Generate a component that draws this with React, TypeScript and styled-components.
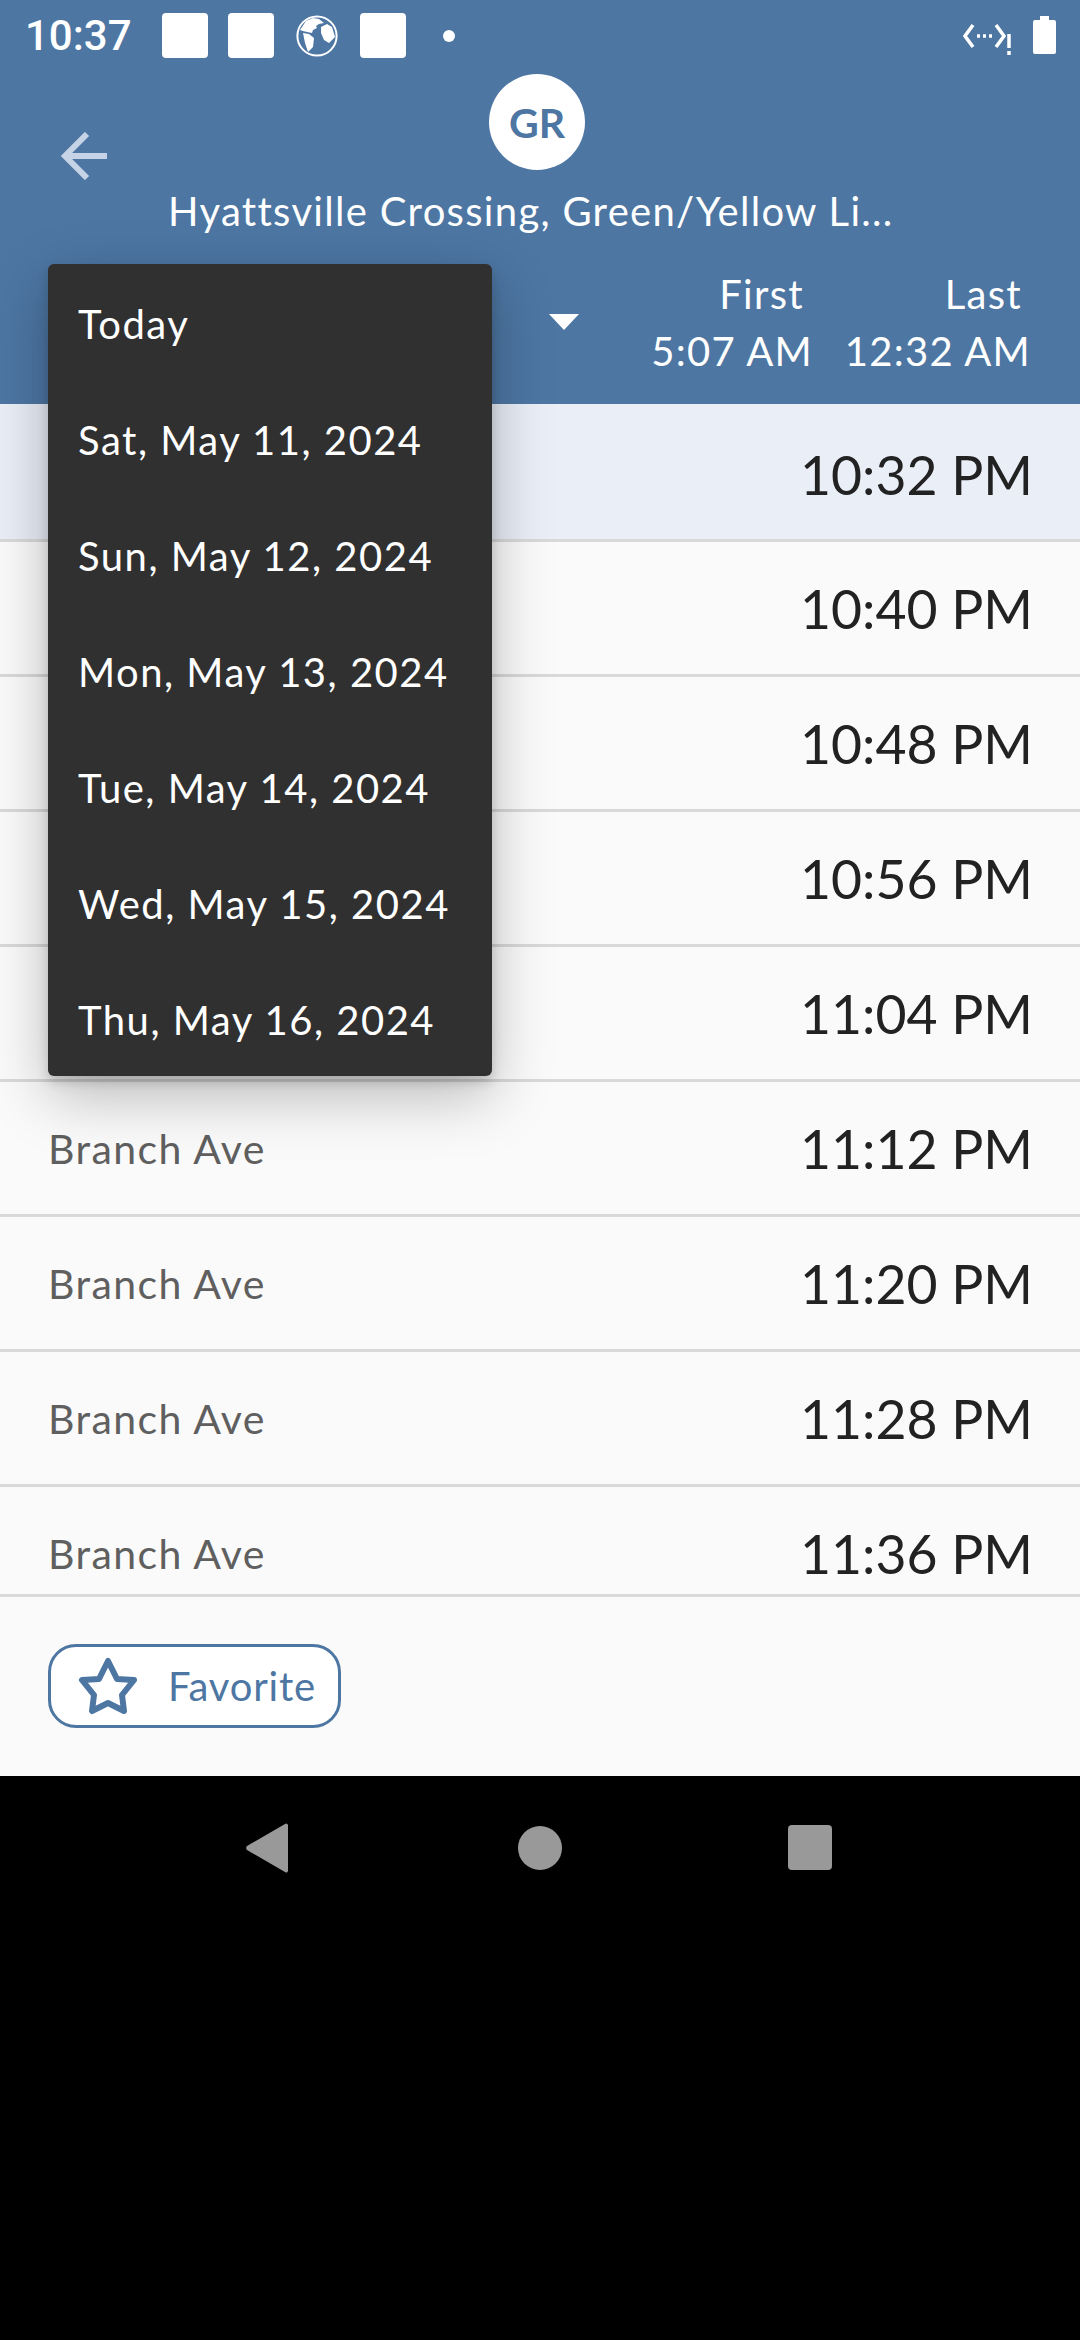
import React from "react";
import styled, { createGlobalStyle } from "styled-components";

const BLUE = "#4d76a3";
const FONT = `"Lato", "Noto Sans", sans-serif`;

const GlobalStyle = createGlobalStyle`
  html, body { margin: 0; padding: 0; background: #000; }
  body { font-family: ${FONT}; }
  * { box-sizing: border-box; }
`;

const Screen = styled.div`
  position: relative;
  width: 1080px;
  height: 2340px;
  display: flex;
  flex-direction: column;
  background: #000;
  overflow: hidden;
`;

const Header = styled.header`
  height: 404px;
  background: ${BLUE};
  display: flex;
  flex-direction: column;
  flex: none;
`;

const StatusBar = styled.div`
  height: 74px;
  padding: 13px 24px 0 25px;
  display: flex;
  align-items: flex-start;
  color: #fff;
`;

const Clock = styled.span`
  font-family: Roboto, sans-serif;
  font-size: 42px;
  font-weight: 500;
  line-height: 46px;
  width: 137px;
`;

const StatusSquare = styled.span`
  width: 46px;
  height: 45px;
  border-radius: 4px;
  background: #fff;
  margin-right: 20px;
`;

const GlobeIcon = styled.svg`
  width: 42px;
  height: 42px;
  margin: 2px 22px 0 2px;
`;

const StatusDot = styled.span`
  width: 12px;
  height: 12px;
  border-radius: 50%;
  background: #fff;
  margin: 17px 0 0 17px;
`;

const StatusRight = styled.div`
  margin-left: auto;
  display: flex;
  gap: 20px;
  align-items: flex-start;
`;

const SignalIcon = styled.svg`
  width: 50px;
  height: 36px;
  margin-top: 7px;
`;

const BatteryIcon = styled.svg`
  width: 23px;
  height: 38px;
  margin-top: 3px;
`;

const TitleBlock = styled.div`
  height: 168px;
  display: flex;
  flex-direction: column;
  align-items: center;
  position: relative;
  padding-right: 6px;
`;

const BackButton = styled.svg`
  position: absolute;
  left: 60px;
  top: 58px;
  width: 48px;
  height: 48px;
`;

const Avatar = styled.div`
  width: 96px;
  height: 96px;
  border-radius: 50%;
  background: #fff;
  color: ${BLUE};
  font-size: 41px;
  font-weight: 700;
  display: flex;
  align-items: center;
  justify-content: center;
  flex: none;
`;

const Title = styled.div`
  align-self: flex-start;
  margin: 15px 0 0 168px;
  font-size: 40px;
  letter-spacing: 1.3px;
  line-height: 52px;
  color: #fff;
  white-space: nowrap;
`;

const ScheduleBar = styled.div`
  flex: 1;
  display: flex;
  align-items: flex-start;
  padding: 24px 47px 0 48px;
`;

const DatePicker = styled.div`
  width: 531px;
  height: 112px;
  display: flex;
  align-items: center;
  justify-content: flex-end;
`;

const Caret = styled.span`
  width: 0;
  height: 0;
  border-left: 15px solid transparent;
  border-right: 15px solid transparent;
  border-top: 16px solid #fff;
`;

const Hours = styled.div<{ $width: number; $gap?: number }>`
  width: ${({ $width }) => $width}px;
  text-align: right;
  color: #fff;
  font-size: 40px;
  letter-spacing: 1.3px;
  line-height: 57px;
`;

const HourLabel = styled.div`
  padding-right: 9px;
`;

const List = styled.main`
  height: 1190px;
  flex: none;
  overflow: hidden;
  background: #fafafa;
`;

const Row = styled.div<{ $active?: boolean }>`
  height: ${({ $active }) => ($active ? 138 : 135)}px;
  display: flex;
  align-items: center;
  padding: ${({ $active }) => ($active ? 5 : 0)}px 47px 0 48px;
  background: ${({ $active }) => ($active ? "#e9eef7" : "#fafafa")};
  border-bottom: 3px solid #d9d9d9;
`;

const Destination = styled.span`
  font-size: 41px;
  letter-spacing: 1.4px;
  color: #5f5f5f;
`;

const Time = styled.span`
  margin-left: auto;
  font-size: 53.5px;
  color: #222;
`;

const Footer = styled.footer`
  flex: none;
  height: 182px;
  background: #fafafa;
  border-top: 3px solid #d9d9d9;
  padding: 47px 48px 0;
`;

const FavoriteButton = styled.button`
  width: 293px;
  height: 84px;
  border: 3px solid ${BLUE};
  border-radius: 28px;
  background: #fff;
  color: ${BLUE};
  font-family: ${FONT};
  font-size: 40px;
  letter-spacing: 0.8px;
  padding: 0 0 0 27px;
  display: flex;
  align-items: center;
  gap: 30px;
`;

const StarIcon = styled.svg`
  width: 60px;
  height: 58px;
  flex: none;
`;

const NavBar = styled.nav`
  flex: 1;
  background: #000;
  display: flex;
  align-items: flex-start;
  justify-content: center;
  padding-top: 46px;
  gap: 210px;
`;

const NavIcon = styled.svg`
  width: 60px;
  height: 52px;
  fill: #999;
  display: block;
`;

const Menu = styled.ul`
  position: absolute;
  left: 48px;
  top: 264px;
  width: 444px;
  height: 812px;
  margin: 0;
  padding: 2px 0 0;
  list-style: none;
  background: #303030;
  border-radius: 6px;
  box-shadow: 0 20px 60px rgba(0, 0, 0, 0.26), 0 6px 12px rgba(0, 0, 0, 0.16);
`;

const MenuItem = styled.li`
  height: 116px;
  padding-left: 30px;
  display: flex;
  align-items: center;
  color: #fff;
  font-size: 40px;
  letter-spacing: 1.5px;
  white-space: nowrap;
`;

const dates = [
  "Today",
  "Sat, May 11, 2024",
  "Sun, May 12, 2024",
  "Mon, May 13, 2024",
  "Tue, May 14, 2024",
  "Wed, May 15, 2024",
  "Thu, May 16, 2024",
];

const times = [
  "10:32 PM",
  "10:40 PM",
  "10:48 PM",
  "10:56 PM",
  "11:04 PM",
  "11:12 PM",
  "11:20 PM",
  "11:28 PM",
  "11:36 PM",
];

// first five rows sit behind the open menu
const FIRST_VISIBLE_DESTINATION = 5;

const App: React.FC = () => {
  return (
    <Screen>
      <GlobalStyle />
      <Header>
        <StatusBar>
          <Clock>10:37</Clock>
          <StatusSquare />
          <StatusSquare />
          <GlobeIcon viewBox="0 0 42 42">
            <circle cx="21" cy="21" r="19.6" fill="none" stroke="#fff" strokeWidth="2" />
            <path
              fill="#fff"
              d="M4 15L10 6l7-3 6 1 5 4-5 1-3 2 1 2-4 2-1 3-5-1-4-1zM7 18l6 1 5 4-1 9-5 5-3-9zM25 12l6-3 5 3 3 10-6 6-5-3-3-7z"
            />
          </GlobeIcon>
          <StatusSquare />
          <StatusDot />
          <StatusRight>
            <SignalIcon viewBox="0 0 50 36" fill="none" stroke="#fff" strokeWidth="3.5">
              <path d="M10 5L2 16l8 11M33 5l8 11-8 11" />
              <path d="M14 16h3M20 16h3M26 16h3" />
              <path d="M46 14v14M46 31v4" />
            </SignalIcon>
            <BatteryIcon viewBox="0 0 23 38" fill="#fff">
              <path d="M7 0h9v4h5a2 2 0 0 1 2 2v30a2 2 0 0 1-2 2H2a2 2 0 0 1-2-2V6a2 2 0 0 1 2-2h5z" />
            </BatteryIcon>
          </StatusRight>
        </StatusBar>
        <TitleBlock>
          <BackButton viewBox="0 0 48 48" fill="none" stroke="#c6d3e6" strokeWidth="6">
            <path d="M47 24H5M27 2L5 24l22 22" />
          </BackButton>
          <Avatar>GR</Avatar>
          <Title>Hyattsville Crossing, Green/Yellow Li...</Title>
        </TitleBlock>
        <ScheduleBar>
          <DatePicker>
            <Caret />
          </DatePicker>
          <Hours $width={234}>
            <HourLabel>First</HourLabel>
            5:07 AM
          </Hours>
          <Hours $width={218}>
            <HourLabel>Last</HourLabel>
            12:32 AM
          </Hours>
        </ScheduleBar>
      </Header>
      <List>
        {times.map((time, i) => (
          <Row key={time} $active={i === 0}>
            {i >= FIRST_VISIBLE_DESTINATION && <Destination>Branch Ave</Destination>}
            <Time>{time}</Time>
          </Row>
        ))}
      </List>
      <Footer>
        <FavoriteButton>
          <StarIcon viewBox="0 0 60 58" fill="none" stroke={BLUE} strokeWidth="6" strokeLinejoin="round">
            <path d="M30 4l9 18 17 1-12 15 2 16-16-8-16 8 2-16L4 23l17-1z" />
          </StarIcon>
          Favorite
        </FavoriteButton>
      </Footer>
      <NavBar>
        <NavIcon viewBox="0 0 60 52">
          <path d="M48 3v46a2 2 0 0 1-3 1L7 28a3 3 0 0 1 0-4L45 2a2 2 0 0 1 3 1z" />
        </NavIcon>
        <NavIcon viewBox="0 0 60 52">
          <circle cx="30" cy="26" r="22" />
        </NavIcon>
        <NavIcon viewBox="0 0 60 52">
          <rect x="8" y="3" width="44" height="45" rx="4" />
        </NavIcon>
      </NavBar>
      <Menu>
        {dates.map((d) => (
          <MenuItem key={d}>{d}</MenuItem>
        ))}
      </Menu>
    </Screen>
  );
};

export default App;
